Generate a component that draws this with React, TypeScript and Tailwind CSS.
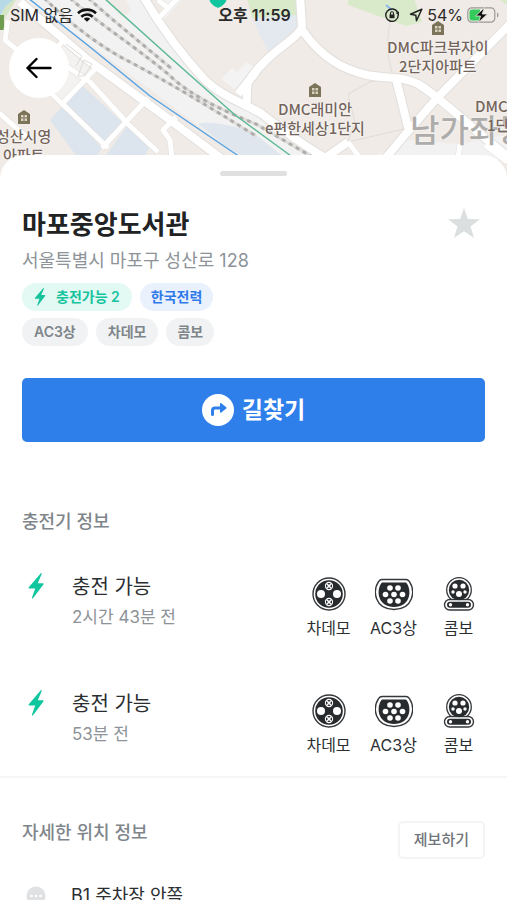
import type { ReactNode } from "react";

function BoltIcon({ className }: { className: string }) {
  return (
    <svg viewBox="0 0 16 26" className={className} fill="currentColor" aria-hidden="true">
      <path d="M12.6.4.8 14.200c-.5.700-.2 1.300.6 1.300h5.800L4 24.600c-.3 1 .4 1.300 1 .6l10.400-13.700c.5-.7.2-1.300-.6-1.300h-5L13.600 1.200c.3-1-.4-1.400-1-.8Z" />
    </svg>
  );
}

function ChademoIcon() {
  return (
    <svg viewBox="0 0 34 34" className="size-[34px]" aria-hidden="true">
      <circle cx="17" cy="17" r="16" fill="#fff" stroke="#35383b" strokeWidth="1.4" />
      <circle cx="17" cy="17" r="13.8" fill="#282b2e" />
      <circle cx="9" cy="17" r="4" fill="#fff" />
      <circle cx="25" cy="17" r="4" fill="#fff" />
      {[9, 25].map((cy) => (
        <g key={cy} fill="none" stroke="#fff" strokeWidth="1.1">
          <circle cx="17" cy={cy} r="3.6" />
          <path d={`M14.8 ${cy - 2.2}l4.4 4.400m0-4.400l-4.400 4.400`} strokeWidth="1.600" />
        </g>
      ))}
    </svg>
  );
}

function Ac3Icon() {
  const pins = [
    [15, 11], [23, 11], [10.5, 17.5], [19, 17.5], [27.5, 17.5], [15, 24], [23, 24],
  ];
  return (
    <svg viewBox="0 0 38 34" className="h-[34px] w-[38px]" aria-hidden="true">
      <path d="M7 2.500h24c1.500 0 2.500.8 3.500 2.200C40.500 14 38.500 32.500 19 32.500S-2.500 14 3.500 4.700C4.500 3.300 5.500 2.500 7 2.500Z" fill="#fff" stroke="#35383b" strokeWidth="1.4" />
      <path d="M8 5.500h22c1 0 1.500.4 2.200 1.500C37 15 34.500 30 19 30S1 15 5.800 7C6.500 5.900 7 5.500 8 5.500Z" fill="#282b2e" />
      {pins.map(([x, y]) => (
        <circle key={`${x}-${y}`} cx={x} cy={y} r="2.800" fill="#fff" />
      ))}
    </svg>
  );
}

function ComboIcon() {
  return (
    <svg viewBox="0 0 32 34" className="h-[34px] w-8" aria-hidden="true">
      <circle cx="16" cy="13" r="12.300" fill="#fff" stroke="#35383b" strokeWidth="1.3" />
      <rect x="1.500" y="22.500" width="29" height="10.500" rx="5.200" fill="#fff" stroke="#35383b" strokeWidth="1.4" />
      <circle cx="16" cy="13" r="10.200" fill="#282b2e" />
      <rect x="4" y="24.700" width="24" height="6" rx="3" fill="#282b2e" />
      <circle cx="7.500" cy="27.700" r="1.700" fill="#fff" />
      <circle cx="24.500" cy="27.700" r="1.700" fill="#fff" />
      <circle cx="12" cy="9" r="2.600" fill="#fff" />
      <circle cx="20" cy="9" r="2.600" fill="#fff" />
      <circle cx="10" cy="15" r="1.700" fill="#fff" />
      <circle cx="22" cy="15" r="1.700" fill="#fff" />
      <circle cx="16" cy="17" r="3" fill="#fff" />
    </svg>
  );
}

function MapDrawing() {
  const roads = [
    "M143-4C158 22 180 53 204 79 222 97 246 104 262 114 282 130 302 144 325 158",
    "M300-4 302 26C299 40 268 50 248 82 246 92 248 98 246 106",
    "M302 30C322 58 342 69 367 75 388 79 402 76 418 84 442 98 470 128 510 158",
    "M512 22 437 98 404 136 384 160",
    "M396 79C400 95 404 110 408 128",
    "M238 94 256 72",
    "M325 158 348 142",
  ];
  const lanes = [
    "M50 92 108 148M66 66 90 82 128 124 158 152M98 66 62 104M148 98 102 148M62 42 46 62M176 117 163 130 170 140 172 158M8 20 5 40 22 54M-2 112 30 140M158 0 168 8M348 142 360 158",
    "M180-4 157 20M460 144 458 158M485 145 507 162",
  ];
  const rails = [
    "M44-2 62 15C82 32 106 50 130 62 168 82 208 106 256 136",
    "M70-2C96 22 132 44 168 74 190 96 226 112 256 124L314 158",
    "M88-2 112 19 172 69",
  ];
  return (
    <svg viewBox="0 0 507 180" preserveAspectRatio="xMidYMin slice" className="block size-full" aria-hidden="true">
      <rect width="507" height="180" fill="#f0ebe6" />
      <path d="M24-2H146C164 30 190 63 215 86L262 118 320 160H244L92 46Z" fill="#f2f2f2" />
      <path d="M60 42 95 62 68 104 50 90Z" fill="#f3f2f1" />
      <path d="M105-2H124L131 10 122 18Z" fill="#f0ebe6" />
      <path d="M164 0h18l-18 20ZM221 79 232 68 237 72 246 62 256 68 238 92Z" fill="#f3f3f3" />
      <path d="M198 124C212 120 230 126 250 130L285 158H240Z" fill="#dfe6ee" />
      <path d="M83 86 124 124 106 146 66 103Z" fill="#dce5ed" />
      <path d="M63 106 102 148 96 158H78L50 120Z" fill="#dce5ed" />
      <path d="M127 126 150 145 144 158H104Z" fill="#dce5ed" />
      <path d="M252 18 296 15 300 28 268 52Z" fill="#e3e9ef" />
      <path d="M247-2H298V15L252 18Z" fill="#d9eacb" />
      <path d="M348-2H414L422 22 406 26 348 5Z" fill="#d9eacb" />
      <path d="M498-2h10v8Z" fill="#d9eacb" />
      <path d="M-2-2H17L5 18-2 31Z" fill="#d4e6c5" />
      <path d="M-2-2H15L5 7-2 20Z" fill="#b8d9e8" />
      <path d="M0 15h4v15H0Z" fill="#6e9d51" />
      <path d="M386 5 392 10" stroke="#8fb5e8" strokeWidth="2" />
      <path d="M372 157 408 140 458 144 507 135V160H370Z" fill="#f2f2f2" />
      <g fill="none" stroke="#e0dcd8">
        <path d="M393 12C386 34 386 54 393 76M348 94 370 82 388 78M348 94 355 122 348 142 408 128" />
      </g>
      <g fill="none" strokeLinejoin="round">
        {roads.map((d) => (
          <path key={d} d={d} stroke="#e2dfdc" strokeWidth="10" />
        ))}
        {lanes.map((d) => (
          <path key={d} d={d} stroke="#e2dfdc" strokeWidth="6" />
        ))}
        <path d="M20 2 88 60 166 117 226 162" stroke="#e2dfdc" strokeWidth="10" />
        {roads.map((d) => (
          <path key={d} d={d} stroke="#fff" strokeWidth="8" />
        ))}
        {lanes.map((d) => (
          <path key={d} d={d} stroke="#fff" strokeWidth="5" />
        ))}
        <path d="M20 2 88 60 166 117 226 162" stroke="#fff" strokeWidth="8" />
        <path d="M66 44 82 56 76 66M84 60 92 64 84 76H78Z" stroke="#dddad8" />
        {rails.map((d) => (
          <g key={d}>
            <path d={d} stroke="#dedddc" strokeWidth="3" />
            <path d={d} stroke="#b0aeab" strokeWidth="3" strokeDasharray="4 4" />
          </g>
        ))}
        <path d="M104-2 173 60 235 115 291 156" stroke="#5db995" strokeWidth="1.5" />
        <path d="M28-2 90 47 150 96 240 157" stroke="#58a3e3" strokeWidth="1.5" />
      </g>
      <path d="M209-2C210 4 214 6 218 8c4-2 8-4 9-10Z" fill="#10c69f" />
    </svg>
  );
}

function BuildingMark() {
  return (
    <svg viewBox="0 0 12 14" className="h-3.5 w-3" aria-hidden="true">
      <path d="M6 0 12 4V14H0V4Z" fill="#7b735a" />
      <path d="M3 5h2.500v2.500H3ZM6.500 5H9v2.500H6.500ZM3 8.500h2.500V11H3ZM6.500 8.500H9V11H6.500Z" fill="#d8d2be" />
    </svg>
  );
}

function Place({ className, lines }: { className: string; lines: string[] }) {
  return (
    <div className={`absolute flex flex-col items-center whitespace-nowrap text-[15px] leading-[19px] font-medium text-[#74655c] [text-shadow:0_0_2px_#fff,0_0_2px_#fff] ${className}`}>
      <BuildingMark />
      <span className="mt-0.5">{lines[0]}</span>
      <span>{lines[1]}</span>
    </div>
  );
}

function StatusBar() {
  return (
    <div className="absolute inset-x-0 top-0 grid h-[30px] grid-cols-3 items-center pr-2 pl-2.5 text-[16px] leading-5 text-[#2a2a2a]">
      <div className="flex items-center gap-1">
        <span>SIM 없음</span>
        <svg viewBox="0 0 20 14" className="h-3.5 w-5" aria-label="Wi-Fi">
          <g fill="none" stroke="#111" strokeWidth="2.6">
            <path d="M1 5.200C6 .4 14 .4 19 5.200" />
            <path d="M4.300 8.700c3.200-3 8.200-3 11.400 0" />
          </g>
          <path d="M10 13.800 6.800 10.700c1.800-1.600 4.600-1.600 6.400 0Z" fill="#111" />
        </svg>
      </div>
      <span className="text-center font-semibold">오후 11:59</span>
      <div className="flex items-center justify-end gap-1">
        <svg viewBox="0 0 14 14" className="mr-1.5 size-3.5" fill="none" stroke="#222" aria-hidden="true">
          <path d="M12.600 4.500A6.200 6.200 0 1 0 13.200 7" strokeWidth="1.4" />
          <path d="M14 3.500v4.200L10.800 5Z" fill="#222" stroke="none" />
          <path d="M4.500 6.500h5v3.700h-5Z" fill="#222" stroke="none" />
          <path d="M5.500 7V5.300a1.500 1.500 0 0 1 3 0V7" strokeWidth="1.1" />
        </svg>
        <svg viewBox="0 0 14 14" className="size-3.5" fill="none" stroke="#222" strokeWidth="1.5" strokeLinejoin="round" aria-hidden="true">
          <path d="M12.800 1.200 1.500 6.300l5.300.9.700 5.500Z" />
        </svg>
        <span>54%</span>
        <svg viewBox="0 0 32 16" className="h-4 w-8" aria-label="배터리 충전 중">
          <rect x=".8" y=".8" width="27" height="14.400" rx="4" fill="none" stroke="#9a9a9a" strokeWidth="1.2" />
          <path d="M30 5.500c2 .8 2 4.200 0 5Z" fill="#9a9a9a" />
          <path d="M5 2.500h8v11H5a2.500 2.500 0 0 1-2.500-2.500V5A2.500 2.500 0 0 1 5 2.500Z" fill="#35cb5c" />
          <path d="M17.500.5 8.500 9h5l-2 6.500L20.500 7h-5.300Z" fill="#111" stroke="#f0ebe6" strokeWidth=".8" />
        </svg>
      </div>
    </div>
  );
}

function Tag({ tone, children }: { tone: string; children: ReactNode }) {
  return (
    <li className={`flex h-7 items-center rounded-full text-[14px] leading-5 font-semibold ${tone}`}>{children}</li>
  );
}

const connectors = [
  { name: "차데모", icon: <ChademoIcon /> },
  { name: "AC3상", icon: <Ac3Icon /> },
  { name: "콤보", icon: <ComboIcon /> },
];

function Charger({ updated }: { updated: string }) {
  return (
    <li className="flex items-start pr-4 pl-7">
      <BoltIcon className="mt-1 h-[26px] w-4 text-[#10c69f]" />
      <div className="ml-7 flex-1 pt-1">
        <p className="text-[20px] leading-7 text-[#2b2e31]">충전 가능</p>
        <p className="mt-1 text-[17px] leading-6 text-[#8d9398]">{updated}</p>
      </div>
      <ul className="flex pt-2">
        {connectors.map((c) => (
          <li key={c.name} className="flex w-[65px] flex-col items-center">
            {c.icon}
            <span className="mt-1.5 text-[16px] leading-[22px] text-[#2b2e31]">{c.name}</span>
          </li>
        ))}
      </ul>
    </li>
  );
}

export default function App() {
  return (
    <div className="flex h-screen flex-col overflow-hidden bg-white font-['Inter','Noto_Sans_CJK_KR',sans-serif]">
      <header className="relative h-[180px] shrink-0 overflow-hidden">
        <MapDrawing />
        <div className="font-['Noto_Sans_CJK_KR',sans-serif]">
          <Place className="top-[110px] -left-1" lines={["성산시영", "아파트"]} />
          <Place className="top-[83px] left-[265px]" lines={["DMC래미안", "e편한세상1단지"]} />
          <Place className="top-[21px] left-[387px]" lines={["DMC파크뷰자이", "2단지아파트"]} />
          <span className="absolute top-[108px] left-[410px] text-[32px] leading-10 font-medium whitespace-nowrap text-[#aeacaa] [text-shadow:0_0_2px_#fff]">남가좌동</span>
          <div className="absolute top-[96px] left-[475px] flex flex-col items-center text-[15px] leading-[19px] font-medium whitespace-nowrap text-[#74655c] [text-shadow:0_0_2px_#fff]">
            <span>DMC센트</span>
            <span>1단지</span>
          </div>
        </div>
        <StatusBar />
        <button type="button" aria-label="뒤로" className="absolute top-[38px] left-[9px] flex size-[60px] items-center justify-center rounded-full bg-white">
          <svg viewBox="0 0 26 22" className="h-[22px] w-[26px]" fill="none" stroke="#000" strokeWidth="2.4" strokeLinecap="round" strokeLinejoin="round" aria-hidden="true">
            <path d="M24.500 11H1.500M10.500 2 1.500 11l9 9" />
          </svg>
        </button>
      </header>

      <main className="relative -mt-[25px] flex-1 rounded-t-[24px] bg-white">
        <div className="mx-auto flex h-10 w-[67px] flex-col pt-4">
          <span className="h-[5px] rounded-full bg-[#e0e0e0]" />
        </div>

        <section className="px-[22px]">
          <div className="flex items-start justify-between pt-3">
            <h1 className="text-[26px] leading-9 font-bold text-[#202224]">마포중앙도서관</h1>
            <button type="button" aria-label="즐겨찾기" className="mr-1">
              <svg viewBox="0 0 34 32" className="h-8 w-[34px]" fill="#dcdfe0" aria-hidden="true">
                <path d="M17 1 21 12 33 12.200 23.500 19.500 27 31 17 24.200 7 31 10.500 19.500 1 12.200 13 12Z" />
              </svg>
            </button>
          </div>
          <p className="mt-1 text-[18px] leading-7 text-[#8d9398]">서울특별시 마포구 성산로 128</p>
          <ul className="mt-2 flex gap-2">
            <Tag tone="gap-2.5 bg-[#e3f9f4] px-3 text-[#16c39d]">
              <BoltIcon className="h-[18px] w-3" />
              충전가능 2
            </Tag>
            <Tag tone="bg-[#e9f1fd] px-[11px] text-[#2f7ae8]">한국전력</Tag>
          </ul>
          <ul className="mt-[7px] flex gap-2">
            <Tag tone="bg-[#f0f2f3] px-3 text-[#7f868b]">AC3상</Tag>
            <Tag tone="bg-[#f0f2f3] px-3 text-[#7f868b]">차데모</Tag>
            <Tag tone="bg-[#f0f2f3] px-[11px] text-[#7f868b]">콤보</Tag>
          </ul>
          <button type="button" className="mt-8 flex h-16 w-full items-center justify-center gap-2 rounded-[5px] bg-[#2f7feb] text-[23px] leading-8 font-bold text-white">
            <svg viewBox="0 0 32 32" className="size-8" aria-hidden="true">
              <circle cx="16" cy="16" r="16" fill="#fff" />
              <path d="M10.500 20.500v-4c0-1.500.8-2.500 2.500-2.500h6" fill="none" stroke="#2f7feb" strokeWidth="3" strokeLinecap="round" />
              <path d="M18 9.800c0-.8.700-1 1.300-.5l5 4c.5.400.5.900 0 1.300l-5 4c-.6.500-1.300.3-1.300-.5Z" fill="#2f7feb" />
            </svg>
            길찾기
          </button>
        </section>

        <section className="border-b-2 border-[#f5f6f6] pt-[66px] pb-5">
          <h2 className="px-[22px] text-[18px] leading-7 font-medium text-[#7f868b]">충전기 정보</h2>
          <ul className="mt-[33px] flex flex-col gap-[47px]">
            <Charger updated="2시간 43분 전" />
            <Charger updated="53분 전" />
          </ul>
        </section>

        <section className="px-[22px] pt-[43px]">
          <div className="flex items-start justify-between">
            <h2 className="text-[18px] leading-6 font-medium text-[#7f868b]">자세한 위치 정보</h2>
            <button type="button" className="h-[38px] rounded-[5px] border-2 border-[#f3f4f4] px-3.5 text-[15px] leading-5 font-medium text-[#6f7579]">
              제보하기
            </button>
          </div>
          <div className="mt-[23px] flex items-center pl-1">
            <svg viewBox="0 0 20 20" className="size-5" aria-hidden="true">
              <circle cx="10" cy="10" r="9.500" fill="#dfe1e2" />
              <g fill="#fff">
                <circle cx="5.500" cy="10" r="1.300" />
                <circle cx="10" cy="10" r="1.300" />
                <circle cx="14.500" cy="10" r="1.300" />
              </g>
            </svg>
            <p className="ml-[25px] text-[18px] leading-7 text-[#2b2e31]">B1 주차장 안쪽</p>
          </div>
        </section>
      </main>
    </div>
  );
}
